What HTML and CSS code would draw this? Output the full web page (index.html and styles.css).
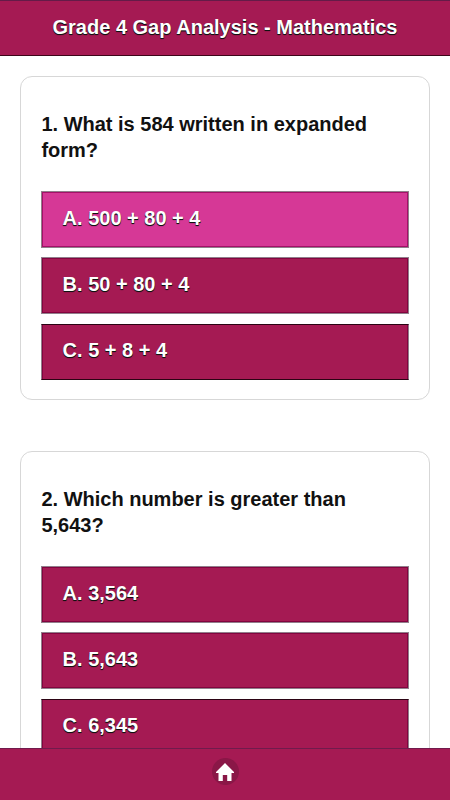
FILE: index.html
```html
<!DOCTYPE html>
<html lang="en">
<head>
<meta charset="utf-8">
<title>Grade 4 Gap Analysis - Mathematics</title>
<link rel="stylesheet" href="styles.css">
</head>
<body>
<div class="app">
  <header class="bar header"><h1 class="title">Grade 4 Gap Analysis - Mathematics</h1></header>
  <main class="content">
    <section class="card">
      <h2 class="question">1. What is 584 written in expanded form?</h2>
      <div class="answers">
        <button class="answer selected">A. 500 + 80 + 4</button>
        <button class="answer">B. 50 + 80 + 4</button>
        <button class="answer">C. 5 + 8 + 4</button>
      </div>
    </section>
    <section class="card">
      <h2 class="question">2. Which number is greater than 5,643?</h2>
      <div class="answers">
        <button class="answer">A. 3,564</button>
        <button class="answer">B. 5,643</button>
        <button class="answer">C. 6,345</button>
      </div>
    </section>
  </main>
  <footer class="bar footer">
    <a class="home" href="#" aria-label="Home">
      <svg width="18" height="18" viewBox="0 0 18 18"><path d="M9 0 L18 9 V10 H15.5 V18 H11.2 V12 H6.8 V18 H2.5 V10 H0 V9 Z" fill="#fff"/></svg>
    </a>
  </footer>
</div>
</body>
</html>
```

FILE: styles.css
```css
* { box-sizing: border-box; }
body { margin: 0; background: #fff; font-family: "Liberation Sans", Arial, sans-serif; color: #111; }
.app { height: 800px; display: flex; flex-direction: column; overflow: hidden; }
.bar { flex: none; display: flex; justify-content: center; background: #a51a53; }
.header { height: 56px; padding-top: 15px; border-top: 1px solid #641b48; border-bottom: 1px solid #3d0519; }
.title { margin: 0; font-size: 20px; line-height: 23px; font-weight: 700; color: #fff; text-shadow: 0 1px 0 #111, 0 1px 1px #111; white-space: nowrap; }
.content { flex: 1; min-height: 0; overflow: hidden; padding: 20px 20px 0; }
.card { height: 324px; margin-bottom: 51px; padding: 34px 20px 0; border: 1px solid #d7d7d7; border-radius: 12px; }
.question { margin: 0 0 28px; padding-left: 0.4px; font-size: 20px; line-height: 26px; font-weight: 700; }
.answers { display: grid; grid-template-rows: 57px 57px 56px; row-gap: 9.3px; }
.answer { padding: 0 20.6px 3px; border: 1px solid #917f8b; border-radius: 0; background: #a51a53; box-shadow: inset 0 0 0 1px #83043f; color: #fff; font: 700 20px/26px "Liberation Sans", Arial, sans-serif; text-align: left; text-shadow: 0 1px 0 #111, 0 1px 1px #111; }
.answer:last-child { padding-bottom: 4px; border-top-color: #2b0313; border-bottom-color: #2b0313; box-shadow: inset 1px 0 #83043f, inset -1px 0 #83043f; }
.selected { background: #d63896; box-shadow: inset 0 0 0 1px #a41068; }
.footer { height: 52px; padding-top: 9px; border-top: 1px solid #701b4c; }
.home { width: 27px; height: 27px; border-radius: 50%; background: #8a1747; display: flex; align-items: center; justify-content: center; }
```
